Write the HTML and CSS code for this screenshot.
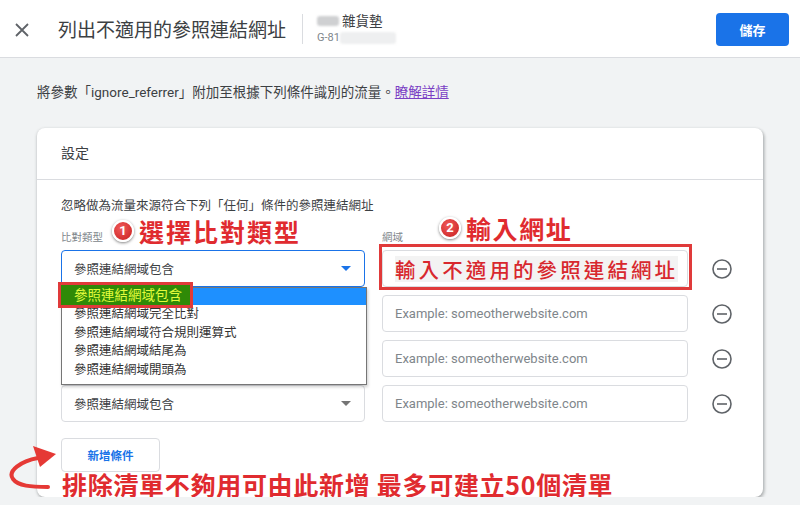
FILE: index.html
```html
<!DOCTYPE html>
<html lang="zh-Hant">
  <head>
    <meta charset="UTF-8" />
    <title>列出不適用的參照連結網址</title>
    <link rel="stylesheet" href="styles.css">
  </head>
  <body>
    <header class="topbar">
      <button class="close-btn" aria-label="關閉">
        <svg width="24" height="24" viewBox="0 0 24 24">
          <path d="M6 6 L18 18 M18 6 L6 18" stroke="#5f6368" stroke-width="1.8" fill="none" />
        </svg>
      </button>
      <h1 class="title">列出不適用的參照連結網址</h1>
      <div class="divider"></div>
      <div class="account">
        <div class="account-name"><span class="blur blur-a"></span>雜貨墊</div>
        <div class="account-id">G-81<span class="blur blur-b"></span></div>
      </div>
      <button class="save-btn">儲存</button>
    </header>

    <main class="content">
      <p class="intro">將參數「ignore_referrer」附加至根據下列條件識別的流量。<a href="#" class="link">瞭解詳情</a></p>

      <section class="card">
        <div class="card-head">設定</div>
        <div class="card-body">
          <p class="hint">忽略做為流量來源符合下列「任何」條件的參照連結網址</p>
          <div class="labels">
            <span>比對類型</span>
            <span>網域</span>
          </div>

          <div class="rows">
            <div class="row">
              <div class="select focused">
                <span>參照連結網域包含</span>
                <span class="caret blue"></span>
                <ul class="dropdown">
                  <li class="active"><span class="green-mark">參照連結網域包含</span></li>
                  <li>參照連結網域完全比對</li>
                  <li>參照連結網域符合規則運算式</li>
                  <li>參照連結網域結尾為</li>
                  <li>參照連結網域開頭為</li>
                </ul>
              </div>
              <div class="field marked"><span class="mark-text">輸入不適用的參照連結網址</span></div>
              <svg class="minus" width="24" height="24" viewBox="0 0 24 24"><circle cx="12" cy="12" r="9" stroke="#5f6368" stroke-width="1.6" fill="none" /><path d="M7 12 H17" stroke="#5f6368" stroke-width="1.6" /></svg>
            </div>
            <div class="row">
              <div class="select"><span></span><span class="caret"></span></div>
              <div class="field">Example: someotherwebsite.com</div>
              <svg class="minus" width="24" height="24" viewBox="0 0 24 24"><circle cx="12" cy="12" r="9" stroke="#5f6368" stroke-width="1.6" fill="none" /><path d="M7 12 H17" stroke="#5f6368" stroke-width="1.6" /></svg>
            </div>
            <div class="row">
              <div class="select"><span></span><span class="caret"></span></div>
              <div class="field">Example: someotherwebsite.com</div>
              <svg class="minus" width="24" height="24" viewBox="0 0 24 24"><circle cx="12" cy="12" r="9" stroke="#5f6368" stroke-width="1.6" fill="none" /><path d="M7 12 H17" stroke="#5f6368" stroke-width="1.6" /></svg>
            </div>
            <div class="row">
              <div class="select"><span>參照連結網域包含</span><span class="caret"></span></div>
              <div class="field">Example: someotherwebsite.com</div>
              <svg class="minus" width="24" height="24" viewBox="0 0 24 24"><circle cx="12" cy="12" r="9" stroke="#5f6368" stroke-width="1.6" fill="none" /><path d="M7 12 H17" stroke="#5f6368" stroke-width="1.6" /></svg>
            </div>
          </div>

          <button class="add-btn">新增條件</button>
        </div>

        <!-- annotations drawn over the screenshot -->
        <div class="note note-1"><span class="num">1</span>選擇比對類型</div>
        <div class="note note-2"><span class="num">2</span>輸入網址</div>
        <div class="note note-3">排除清單不夠用可由此新增 最多可建立50個清單</div>
        <svg class="curve" width="60" height="60" viewBox="0 0 60 60">
          <path d="M31 17 C14 20 0 30 6 38 C11 45 24 46 41 46" stroke="#e53935" stroke-width="4" fill="none" stroke-linecap="round" />
          <path d="M26 5 L49 13 L33 26 Z" fill="#e53935" />
        </svg>
      </section>
    </main>
  </body>
</html>
```

FILE: styles.css
```css
body {
  margin: 0;
  background: #f1f3f4;
  font-family: Roboto, "Noto Sans CJK TC", sans-serif;
  color: #3c4043;
  overflow: hidden;
}
.topbar {
  height: 57px;
  background: #fff;
  border-bottom: 1px solid #dadce0;
  display: flex;
  align-items: center;
  padding: 0 11px 0 10px;
}
.close-btn {
  background: none;
  border: none;
  padding: 0;
  width: 24px;
  height: 24px;
  margin-top: 2px;
}
.title {
  margin: 0 0 0 24px;
  font-size: 19px;
  font-weight: 400;
  color: #3c4043;
}
.divider {
  width: 1px;
  height: 30px;
  background: #dadce0;
  margin: 0 14px 0 16px;
}
.account {
  display: flex;
  flex-direction: column;
  gap: 2px;
}
.account-name {
  font-size: 13.5px;
  line-height: 16px;
  color: #3c4043;
  display: flex;
  align-items: center;
}
.account-id {
  font-size: 11px;
  line-height: 14px;
  color: #80868b;
  display: flex;
  align-items: center;
}
.blur {
  display: inline-block;
  border-radius: 3px;
}
.blur-a {
  width: 22px;
  height: 10px;
  background: #cfd0d2;
  margin-right: 3px;
  filter: blur(1px);
}
.blur-b {
  width: 56px;
  height: 12px;
  background: #eeeff0;
  filter: blur(1px);
}
.save-btn {
  margin-left: auto;
  width: 73px;
  height: 33px;
  background: #1a73e8;
  color: #fff;
  border: none;
  border-radius: 4px;
  font-family: "Noto Sans CJK TC", sans-serif;
  font-size: 13px;
  font-weight: 700;
  margin-top: 1px;
}
.content {
  padding: 0 37px;
}
.intro {
  margin: 24px 0 26px;
  font-size: 13.5px;
  line-height: 20px;
  color: #3c4043;
}
.link {
  color: #7b3fc4;
  text-decoration: underline;
}
.card {
  position: relative;
  background: #fff;
  border-radius: 8px;
  box-shadow: 0 1px 3px rgba(60, 64, 67, 0.35), 2px 2px 3px rgba(60, 64, 67, 0.2);
  height: 369px;
}
.card-head {
  height: 52px;
  box-sizing: border-box;
  padding: 15px 24px 0;
  font-size: 14px;
  line-height: 20px;
  border-bottom: 1px solid #dadce0;
}
.card-body {
  padding: 17px 24px 0;
}
.hint {
  margin: 0;
  font-size: 12.5px;
  line-height: 18px;
  color: #3c4043;
}
.labels {
  display: grid;
  grid-template-columns: 304px 306px;
  column-gap: 17px;
  margin-top: 16px;
  font-size: 10.5px;
  line-height: 14px;
  color: #80868b;
}
.rows {
  display: flex;
  flex-direction: column;
  gap: 8px;
  margin-top: 5px;
}
.row {
  display: grid;
  grid-template-columns: 304px 306px 24px;
  column-gap: 17px;
  align-items: center;
}
.row .minus {
  margin-left: 5px;
}
.select,
.field {
  position: relative;
  height: 37px;
  box-sizing: border-box;
  border: 1px solid #dadce0;
  border-radius: 4px;
  display: flex;
  align-items: center;
  padding: 0 12px;
  font-size: 12.5px;
}
.select {
  color: #3c4043;
  justify-content: space-between;
}
.select.focused {
  border-color: #1a73e8;
}
.field {
  color: #80868b;
  font-size: 13px;
}
.caret {
  width: 0;
  height: 0;
  border-left: 5px solid transparent;
  border-right: 5px solid transparent;
  border-top: 5px solid #757575;
  margin-right: 1px;
}
.caret.blue {
  border-top-color: #1a73e8;
}
.dropdown {
  position: absolute;
  z-index: 2;
  top: 36px;
  left: -1px;
  width: 306px;
  margin: 0;
  padding: 0 0 4px;
  list-style: none;
  background: #fff;
  border: 1px solid #767676;
  box-sizing: border-box;
  box-shadow: 1px 2px 3px rgba(0, 0, 0, 0.2);
}
.dropdown li {
  height: 18.7px;
  line-height: 18.7px;
  padding-left: 12px;
  font-size: 12.5px;
  color: #333;
}
.dropdown li.active {
  position: relative;
  background: #1e90ff;
  height: 17px;
}
.green-mark {
  position: absolute;
  top: -6px;
  left: -4px;
  width: 135px;
  height: 26px;
  box-sizing: border-box;
  border: 3px solid #e03a3a;
  background: #2f8a07;
  color: #e3fb3c;
  font-size: 13.5px;
  line-height: 20px;
  padding-left: 13px;
}
.field.marked {
  padding: 0 10px 0 12px;
}
.field.marked::after {
  content: "";
  position: absolute;
  top: -7px;
  left: -4px;
  right: -5px;
  bottom: -4px;
  border: 3px solid #e03a3a;
}
.mark-text {
  color: #d8282e;
  font-family: "Noto Sans CJK TC", sans-serif;
  font-size: 20.5px;
  font-weight: 500;
  letter-spacing: 3.1px;
  background: #f3f3f3;
  line-height: 26px;
  white-space: nowrap;
}
.add-btn {
  margin-top: 16px;
  width: 99px;
  height: 34px;
  background: #fff;
  border: 1px solid #dadce0;
  border-radius: 4px;
  color: #1a73e8;
  font-family: "Noto Sans CJK TC", sans-serif;
  font-size: 11.5px;
  font-weight: 700;
}
.note {
  position: absolute;
  z-index: 4;
  display: flex;
  align-items: center;
  color: #e02b2f;
  font-family: "Noto Sans CJK TC", sans-serif;
  font-weight: 700;
  font-size: 25px;
  line-height: 30px;
  white-space: nowrap;
  text-shadow: 0 0 2px #fff, 0 0 2px #fff, 1px 1px 2px #fff, -1px -1px 2px #fff;
}
.note-1 {
  left: 75px;
  top: 88px;
  letter-spacing: 2px;
}
.note-2 {
  left: 402px;
  top: 85px;
  letter-spacing: 1.6px;
}
.note-3 {
  left: 25px;
  top: 341px;
  letter-spacing: 0.7px;
}
.num {
  width: 18px;
  height: 18px;
  margin-right: 5px;
  border-radius: 50%;
  border: 2px solid #fff;
  background: radial-gradient(circle at 40% 35%, #f05a5a, #c81e1e);
  box-shadow: 0 1px 3px rgba(0, 0, 0, 0.5);
  color: #fff;
  font-family: Roboto, sans-serif;
  font-size: 13px;
  line-height: 18px;
  text-align: center;
  letter-spacing: 0;
  text-shadow: none;
}
.curve {
  position: absolute;
  z-index: 4;
  left: -30px;
  top: 313px;
}
```
